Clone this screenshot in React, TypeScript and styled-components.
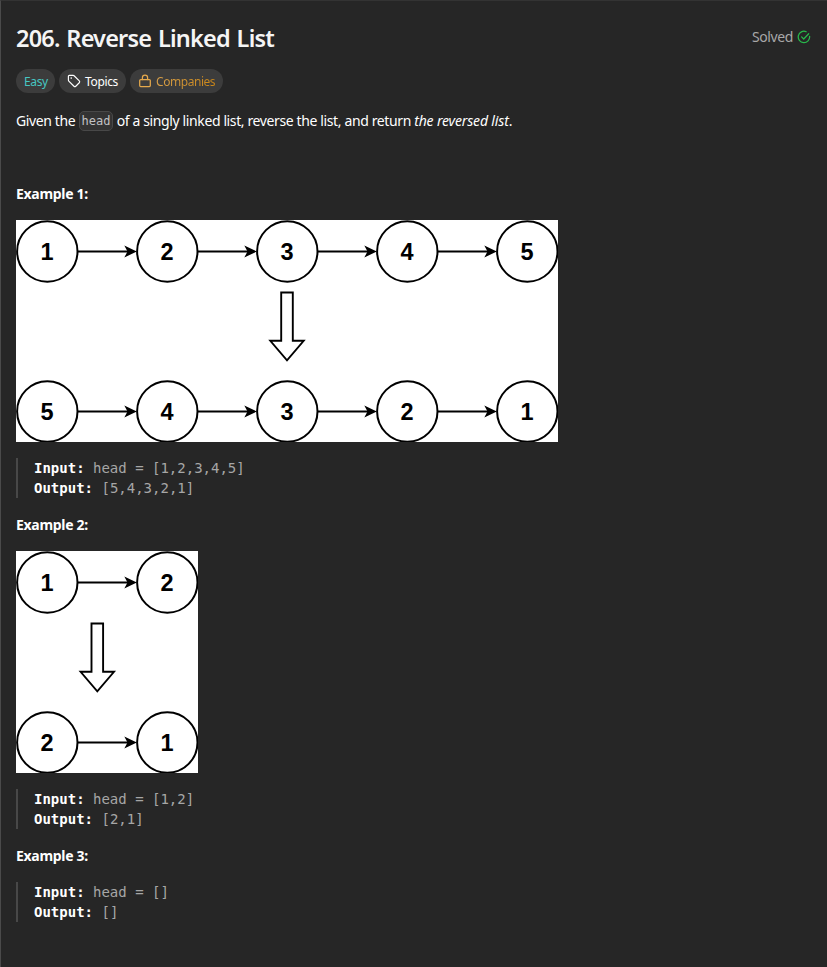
import React from "react";
import styled, { createGlobalStyle } from "styled-components";

const GlobalStyle = createGlobalStyle`
  * { box-sizing: border-box; }
  body { margin: 0; background: #262626; }
`;

const Panel = styled.main`
  height: 967px;
  border-top: 1px solid #333;
  border-left: 1px solid #4a4a4a;
  background: #262626;
  color: #fff;
  padding: 20px 16px 0 15px;
  font-family: "Noto Sans", sans-serif;
  font-size: 14px;
  line-height: 20px;
`;

const Header = styled.header`
  display: flex;
  justify-content: space-between;
  align-items: center;
  height: 32px;
`;

const Title = styled.h1`
  margin: 0;
  padding-top: 1px;
  font-size: 23.5px;
  line-height: 32px;
  font-weight: 600;
  letter-spacing: -0.8px;
  word-spacing: 1.4px;
  color: #f5f5f5;
  white-space: nowrap;
`;

const Status = styled.div`
  display: flex;
  align-items: center;
  gap: 4px;
  color: #a8a8a8;
  letter-spacing: -0.4px;
`;

const Tags = styled.div`
  display: flex;
  gap: 4px;
  margin-top: 16px;
`;

const Tag = styled.span<{ $width: number; $color: string }>`
  display: flex;
  align-items: center;
  gap: 4px;
  width: ${(p) => p.$width}px;
  height: 24px;
  padding: 1px 8px 0;
  border-radius: 12px;
  background: #3c3c3c;
  color: ${(p) => p.$color};
  font-size: 12px;
  line-height: 16px;
  letter-spacing: -0.35px;
  white-space: nowrap;

  svg {
    flex: none;
    margin-top: -1px;
  }
`;

const GoldText = styled.span`
  background: linear-gradient(90deg, #d8a04a, #c98517);
  background-clip: text;
  color: transparent;
  letter-spacing: -0.45px;
`;

const Statement = styled.p`
  margin: 18px 0 0;
  letter-spacing: -0.38px;
  white-space: nowrap;

  em {
    letter-spacing: -0.16px;
  }
`;

const Code = styled.code`
  display: inline-block;
  height: 20px;
  padding: 0 2px;
  border: 1px solid #484848;
  border-radius: 5px;
  background: #333;
  color: #c2c2c5;
  font: 12px/18px "DejaVu Sans Mono", monospace;
  letter-spacing: 0;
  vertical-align: top;
`;

const ExampleTitle = styled.h2<{ $top: number }>`
  margin: ${(p) => p.$top}px 0 16px;
  font-size: 14px;
  line-height: 20px;
  font-weight: 700;
  letter-spacing: -0.3px;
`;

const Diagram = styled.svg`
  display: block;
  margin-bottom: 16px;
  background: #fff;
`;

const Sample = styled.pre`
  margin: 0;
  padding-left: 16px;
  border-left: 2px solid #484848;
  color: #a6a6a6;
  font: 14px/20px "DejaVu Sans Mono", monospace;
`;

const Label = styled.strong`
  color: #fff;
`;

const TagIcon = () => (
  <svg width="14" height="14" viewBox="0 0 14 14" fill="none" stroke="currentColor" strokeWidth="1.15" strokeLinejoin="round">
    <path d="M1.4 2.2v3.9c0 .35.14.68.38.93l5.2 5.2c.5.5 1.3.5 1.8 0l3.5-3.5c.5-.5.5-1.3 0-1.8l-5.2-5.2a1.3 1.3 0 0 0-.93-.38H2.3a.9.9 0 0 0-.9.9z" />
    <circle cx="4.2" cy="4.1" r=".8" fill="currentColor" stroke="none" />
  </svg>
);

const LockIcon = () => (
  <svg width="14" height="14" viewBox="0 0 14 14" fill="none" stroke="#e5a94c" strokeWidth="1.25" strokeLinecap="round">
    <rect x="1.7" y="5.6" width="10.6" height="7" rx="1" />
    <path d="M4.4 5.6V3.8a2.6 2.6 0 0 1 5.2 0v1.8" />
  </svg>
);

const SolvedIcon = () => (
  <svg width="14" height="14" viewBox="0 0 14 14" fill="none" stroke="#28b84b" strokeWidth="1.25" strokeLinecap="round" strokeLinejoin="round">
    <path d="M9.2 1.7A5.7 5.7 0 1 0 12.6 6.3" />
    <path d="M4.6 6.9l2.1 2.1 5-5.3" />
  </svg>
);

const ListRow = ({ values, y }: { values: number[]; y: number }) => (
  <g>
    {values.map((value, i) => {
      const x = 31.3 + i * 120;
      return (
        <g key={value}>
          <circle cx={x} cy={y} r="30.2" fill="#fff" stroke="#000" strokeWidth="2" />
          <text x={x - 0.3} y={y + 8.3} fontFamily="Liberation Sans, sans-serif" fontWeight="700" fontSize="23.5" textAnchor="middle">
            {value}
          </text>
          {i < values.length - 1 && (
            <>
              <path d={`M${x + 30} ${y}H${x + 83}`} stroke="#000" strokeWidth="1.8" />
              <path d={`M${x + 89.5} ${y}l-12.5 -6l3.2 6l-3.2 6z`} />
            </>
          )}
        </g>
      );
    })}
  </g>
);

const ReverseDiagram = ({ values, width }: { values: number[]; width: number }) => {
  const center = width / 2;
  const arrow = values.length === 2 ? center - 9.7 : center;
  return (
    <Diagram width={width} height="222" viewBox={`0 0 ${width} 222`}>
      <ListRow values={values} y={31.5} />
      <path
        d={`M${arrow - 5.8} 72.5h11.6v48.3h10.9L${arrow} 140.3l-16.7 -19.5h10.9z`}
        fill="#fff"
        stroke="#000"
        strokeWidth="1.9"
      />
      <ListRow values={[...values].reverse()} y={191.5} />
    </Diagram>
  );
};

const SampleBlock = ({ input, output }: { input: string; output: string }) => (
  <Sample>
    <Label>Input:</Label> head = {input}
    {"\n"}
    <Label>Output:</Label> {output}
  </Sample>
);

export default function App() {
  return (
    <>
      <GlobalStyle />
      <Panel>
        <Header>
          <Title>206. Reverse Linked List</Title>
          <Status>
            Solved <SolvedIcon />
          </Status>
        </Header>
        <Tags>
          <Tag $width={39} $color="#46c6c2">Easy</Tag>
          <Tag $width={67} $color="#fff">
            <TagIcon />
            Topics
          </Tag>
          <Tag $width={93} $color="#d09030">
            <LockIcon />
            <GoldText>Companies</GoldText>
          </Tag>
        </Tags>
        <Statement>
          Given the <Code>head</Code> of a singly linked list, reverse the list, and return <em>the reversed list</em>.
        </Statement>
        <ExampleTitle $top={53}>Example 1:</ExampleTitle>
        <ReverseDiagram values={[1, 2, 3, 4, 5]} width={542} />
        <SampleBlock input="[1,2,3,4,5]" output="[5,4,3,2,1]" />
        <ExampleTitle $top={17}>Example 2:</ExampleTitle>
        <ReverseDiagram values={[1, 2]} width={182} />
        <SampleBlock input="[1,2]" output="[2,1]" />
        <ExampleTitle $top={17}>Example 3:</ExampleTitle>
        <SampleBlock input="[]" output="[]" />
      </Panel>
    </>
  );
}
